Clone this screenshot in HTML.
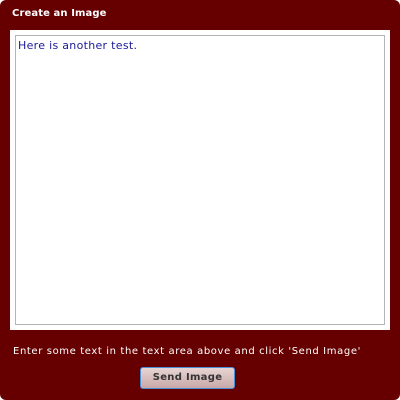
<!DOCTYPE html>
<html><head><style>
body{margin:0;width:400px;height:400px;background:#fff;overflow:hidden}
.box{position:absolute;left:0;top:0;width:400px;height:400px;background:#660000;border-radius:6px}
.t{position:absolute;left:12px;top:8px;color:#fff;font:bold 10px "DejaVu Sans",sans-serif;letter-spacing:0.1px}
.w{position:absolute;left:10px;top:30px;width:380px;height:300px;background:#fff}
.ta{position:absolute;left:15px;top:35px;width:368px;height:288px;border:1px solid #b4b4b4;background:#fff}
.tx{position:absolute;left:2px;top:3px;color:#1a1a9a;font:11px "DejaVu Sans",sans-serif;letter-spacing:0.3px}
.m{position:absolute;left:13px;top:346px;color:#fff;font:10px "DejaVu Sans",sans-serif;letter-spacing:0.62px}
.b{position:absolute;left:140px;top:367px;width:93px;height:20px;border:1px solid #4a90d9;border-radius:3px;background:linear-gradient(#e8d4d4,#c8a8a8);color:#333;font:bold 10px "DejaVu Sans",sans-serif;text-align:center;line-height:20px;letter-spacing:0.3px}
</style></head><body>
<div class="box">
<div class="t">Create an Image</div>
<div class="w"></div>
<div class="ta"><div class="tx">Here is another test.</div></div>
<div class="m">Enter some text in the text area above and click 'Send Image'</div>
<div class="b">Send Image</div>
</div>
</body></html>
